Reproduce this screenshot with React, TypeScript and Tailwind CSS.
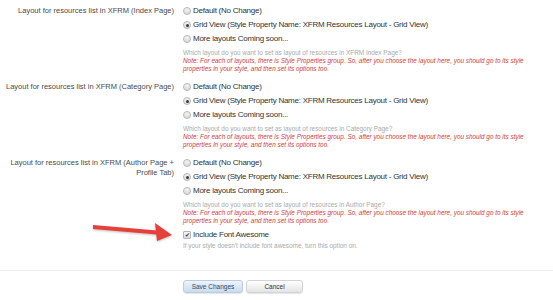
import React from 'react';

const font = { fontFamily: '"Liberation Sans", Arial, sans-serif' };

function Radio({ checked }: { checked?: boolean }) {
  return (
    <span className="flex h-[8px] w-[8px] shrink-0 items-center justify-center rounded-full border border-[#b5b5b5] bg-gradient-to-b from-[#f4f4f4] to-[#dcdcdc]">
      {checked && <span className="h-[3px] w-[3px] rounded-full bg-[#3a3a3a]" />}
    </span>
  );
}

function LayoutRow({ label, page }: { label: React.ReactNode; page: string }) {
  return (
    <div className="grid grid-cols-[176px_1fr] pt-[4px] pb-[3px]">
      <div className="pr-[2px] pt-[2px] text-right text-[7.5px] leading-[10px] text-[#4a4a4a]">{label}</div>
      <div className="pl-[7px]">
        {['Default (No Change)', 'Grid View (Style Property Name: XFRM Resources Layout - Grid View)', 'More layouts Coming soon...'].map(
          (opt, i) => (
            <div key={opt} className="flex h-[14px] items-center gap-[2px] text-[8px] tracking-[-0.25px] text-[#333]">
              <Radio checked={i === 1} />
              <span>{opt}</span>
            </div>
          )
        )}
        <div className="mt-[3px] h-[8px] whitespace-nowrap text-[6.4px] leading-[8px] text-[#aaa]">
          Which layout do you want to set as layout of resources in {page}?
        </div>
        <div className="whitespace-nowrap text-[6.4px] italic leading-[8px] text-[#d23c3c]">
          Note: For each of layouts, there is Style Properties group. So, after you choose the layout here, you should go to its style
          <br />
          properties in your style, and then set its options too.
        </div>
      </div>
    </div>
  );
}

export default function App() {
  return (
    <div className="relative h-[300px] w-[553px] overflow-hidden bg-white" style={font}>
      <LayoutRow label="Layout for resources list in XFRM (Index Page)" page="XFRM Index Page" />
      <LayoutRow label="Layout for resources list in XFRM (Category Page)" page="Category Page" />
      <LayoutRow
        label={
          <>
            Layout for resources list in XFRM (Author Page +
            <br />
            Profile Tab)
          </>
        }
        page="Author Page"
      />

      <div className="pl-[183px]">
        <div className="flex h-[14px] items-center gap-[2px] text-[8px] tracking-[-0.25px] text-[#333]">
          <span className="flex h-[8px] w-[8px] shrink-0 items-center justify-center rounded-[1px] border border-[#b5b5b5] bg-gradient-to-b from-[#f6f6f6] to-[#dcdcdc] text-[6px] leading-none tracking-normal text-[#333]">
            ✔
          </span>
          <span>Include Font Awesome</span>
        </div>
        <div className="h-[8px] whitespace-nowrap text-[6.4px] leading-[8px] text-[#aaa]">
          If your style doesn't include font awesome, turn this option on.
        </div>
      </div>

      <div className="mt-[20px] border-t border-[#eeeeee] pt-[9px] pl-[183px]">
        <div className="flex gap-[3px]">
          <button className="h-[13px] w-[60px] rounded-[3px] border border-[#b9cde2] bg-gradient-to-b from-[#eef4fa] to-[#c8dbee] text-[6.5px] text-[#2c4a6b] shadow-[0_1px_1px_rgba(0,0,0,0.1)]">
            Save Changes
          </button>
          <button className="h-[13px] w-[57px] rounded-[3px] border border-[#d2d2d2] bg-gradient-to-b from-[#ffffff] to-[#e4e4e4] text-[6.5px] text-[#333] shadow-[0_1px_1px_rgba(0,0,0,0.1)]">
            Cancel
          </button>
        </div>
      </div>

      <svg className="absolute left-0 top-0" width="553" height="300" style={{ filter: 'drop-shadow(0 1px 1px rgba(0,0,0,0.25))' }}>
        <polygon points="93,225 157,230.5 157,234.5 93,229" fill="#e5403a" />
        <polygon points="155,223 172,235 157,241" fill="#e5403a" />
      </svg>
    </div>
  );
}
